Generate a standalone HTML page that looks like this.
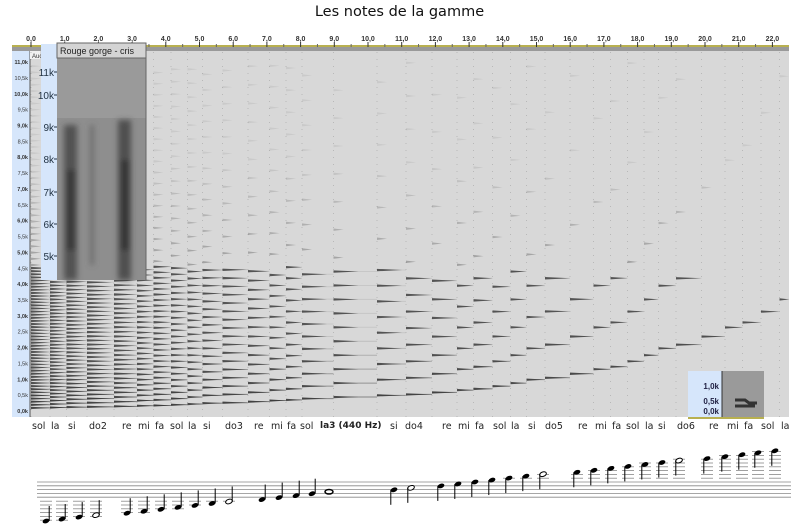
<!DOCTYPE html>
<html><head><meta charset="utf-8"><style>
*{margin:0;padding:0}
body{width:799px;height:528px;background:#fff;position:relative;overflow:hidden;font-family:"DejaVu Sans","Liberation Sans",sans-serif}
.t{position:absolute;top:4px;left:0;width:799px;text-align:center;font-size:14.5px;color:#111}
.lab{position:absolute;top:421px;font-size:9.5px;color:#222;white-space:nowrap}
svg{position:absolute;left:0;top:0}
</style></head><body>
<div class="t">Les notes de la gamme</div>
<svg id="s" width="799" height="528" font-family="Liberation Sans, sans-serif"></svg>
<div id="labs"></div>
<script>
var s=document.getElementById('s'),h='';
var notes=[["sol",40,98],["la",56,110],["si",73,123.5],["do2",97,131],["re",127,147],["mi",143,165],["fa",160,175],["sol",178,196],["la",193,220],["si",208,247],["do3",233,262],["re",259,294],["mi",276,330],["fa",292,349],["sol",308,392],["la3 (440 Hz)",355,440],["si",395,494],["do4",413,523],["re",447,587],["mi",463,659],["fa",480,698],["sol",501,784],["la",516,880],["si",533,988],["do5",553,1047],["re",583,1175],["mi",600,1319],["fa",617,1397],["sol",634,1568],["la",650,1760],["si",663,1976],["do6",685,2093],["re",714,2349],["mi",732,2637],["fa",749,2794],["sol",769,3136],["la",786,3520]];
h+='<rect x="12" y="31" width="777" height="15" fill="#fff"/><rect x="12" y="45" width="777" height="2" fill="#b8b050"/><rect x="12" y="47" width="777" height="4" fill="#999"/>';
for(var i=0;i<=22;i++){var x=31+i*33.7;h+='<text x="'+x+'" y="41" font-size="7" font-weight="bold" fill="#333" text-anchor="middle">'+i+',0</text><line x1="'+x+'" y1="42" x2="'+x+'" y2="47" stroke="#333"/>';if(i<22)h+='<line x1="'+(x+16.85)+'" y1="44" x2="'+(x+16.85)+'" y2="47" stroke="#666"/>';}
h+='<rect x="30" y="51" width="759" height="366" fill="#d8d8d8"/><rect x="12" y="51" width="18" height="366" fill="#d6e6fb"/><line x1="30" y1="51" x2="30" y2="417" stroke="#555"/>';
h+='<rect x="30" y="51" width="10" height="8" fill="#f0f0f0"/><text x="32" y="58" font-size="6" fill="#333">Auc</text>';
for(var k=0;k<=22;k++){var y=411-k*15.86;var v=(k/2).toFixed(1).replace('.',',');h+='<text x="28" y="'+(y+2)+'" font-size="5.5" fill="#333" text-anchor="end" '+(k%2==0?'font-weight="bold"':'')+'>'+v+'k</text>';}
for(var n=0;n<notes.length;n++){var x0=n==0?31:(notes[n-1][1]+notes[n][1])/2+2;var x1=n==notes.length-1?789:(notes[n][1]+notes[n+1][1])/2+2;var f=notes[n][2];
h+='<line x1="'+x0+'" y1="52" x2="'+x0+'" y2="417" stroke="#b0b0b0" stroke-width="0.8" stroke-dasharray="1,6"/>';
for(var m=1;m*f<11000;m++){var fh=m*f;var y=411-fh/1000*31.7;
 var lop=fh<4600?Math.max(0.1,0.6-fh/6000-m*0.015):0;
 var wop=fh<4600?0.7:Math.max(0.08,0.3-(fh-4600)/15000);
 if(fh>=4600&&m%2==0)continue;
 if(lop>0)h+='<line x1="'+x0+'" y1="'+y+'" x2="'+x1+'" y2="'+y+'" stroke="#333" stroke-opacity="'+lop+'" stroke-width="1"/>';
 var wl=fh<4600?Math.min(25,x1-x0):Math.min(10,x1-x0);
 h+='<polygon points="'+x0+','+(y-1.2)+' '+(x0+wl)+','+y+' '+x0+','+(y+1.2)+'" fill="#222" fill-opacity="'+wop+'"/>';}}
h+='<rect x="41" y="44" width="16" height="236" fill="#d6e6fb"/>';
[[11,72],[10,95],[9,127],[8,159],[7,192],[6,224],[5,256]].forEach(function(a){h+='<text x="54" y="'+(a[1]+4)+'" font-size="10" fill="#234" text-anchor="end">'+a[0]+'k</text><line x1="54" y1="'+a[1]+'" x2="57" y2="'+a[1]+'" stroke="#234"/>';});
h+='<defs><filter id="b"><feGaussianBlur stdDeviation="3"/></filter></defs>';
h+='<rect x="57" y="58" width="89" height="222" fill="#8e8e8e"/><rect x="57" y="58" width="89" height="60" fill="#a0a0a0" opacity="0.7"/>';
h+='<g filter="url(#b)"><rect x="64" y="125" width="13" height="155" fill="#3c3c3c" opacity="0.75"/><rect x="90" y="125" width="4" height="140" fill="#555" opacity="0.6"/><rect x="118" y="120" width="13" height="160" fill="#3a3a3a" opacity="0.75"/><rect x="67" y="170" width="8" height="80" fill="#222" opacity="0.5"/><rect x="121" y="160" width="8" height="90" fill="#222" opacity="0.5"/></g>';
h+='<rect x="57" y="43" width="89" height="15" fill="#d4d4d4" stroke="#666"/><line x1="146" y1="58" x2="146" y2="280" stroke="#666"/><text x="60" y="54" font-size="9" fill="#222">Rouge gorge - cris</text>';
h+='<rect x="688" y="371" width="34" height="47" fill="#d6e6fb"/><rect x="722" y="371" width="42" height="46" fill="#9a9a9a"/><path d="M735,400 h10 l4,3 h8 M735,406 h20" stroke="#333" stroke-width="3"/><rect x="688" y="417" width="76" height="2" fill="#b8b050"/><line x1="722" y1="371" x2="722" y2="417" stroke="#333"/>';
[["1,0k",386],["0,5k",401],["0,0k",411]].forEach(function(a){h+='<text x="719" y="'+(a[1]+3)+'" font-size="8" font-weight="bold" fill="#224" text-anchor="end">'+a[0]+'</text>';});
for(var l=0;l<5;l++){var y=482+l*3.8;h+='<line x1="37" y1="'+y+'" x2="791" y2="'+y+'" stroke="#888" stroke-width="0.8"/>';}
var sx=[46,62,79,96,127,144,161,178,195,212,229,262,279,296,312,329,394,411,441,458,475,492,509,526,543,577,594,611,628,645,662,679,707,725,742,758,775];
for(var n=0;n<sx.length;n++){var y=521-n*1.95;var x=sx[n];var half=(n==3||n==10||n==17||n==24||n==31);
 if(y>497.5){for(var ly=501.2;ly<=y+1.5;ly+=3.8)h+='<line x1="'+(x-6)+'" y1="'+ly+'" x2="'+(x+6)+'" y2="'+ly+'" stroke="#888" stroke-width="0.8"/>';}
 if(y<480){for(var ly=478.2;ly>=y-1.5;ly-=3.8)h+='<line x1="'+(x-6)+'" y1="'+ly+'" x2="'+(x+6)+'" y2="'+ly+'" stroke="#888" stroke-width="0.8"/>';}
 if(n==15){h+='<ellipse cx="'+x+'" cy="'+y+'" rx="4" ry="2.3" fill="none" stroke="#000" stroke-width="1.5"/>';continue;}
 h+='<ellipse cx="'+x+'" cy="'+y+'" rx="3.5" ry="2.2" transform="rotate(-20 '+x+' '+y+')" '+(half?'fill="#fff" stroke="#000"':'fill="#000"')+'/>';
 if(n>15)h+='<line x1="'+(x-3.2)+'" y1="'+y+'" x2="'+(x-3.2)+'" y2="'+(y+15)+'" stroke="#000"/>';else h+='<line x1="'+(x+3.2)+'" y1="'+y+'" x2="'+(x+3.2)+'" y2="'+(y-15)+'" stroke="#000"/>';}
s.innerHTML=h;
var L='';notes.forEach(function(a){var w=a[0].length*6;L+='<div class="lab" style="left:'+(a[1]-w/2+1)+'px;'+(a[2]==440?'font-weight:bold;font-size:9px':'')+'">'+a[0]+'</div>';});
document.getElementById('labs').innerHTML=L;
</script>
</body></html>
